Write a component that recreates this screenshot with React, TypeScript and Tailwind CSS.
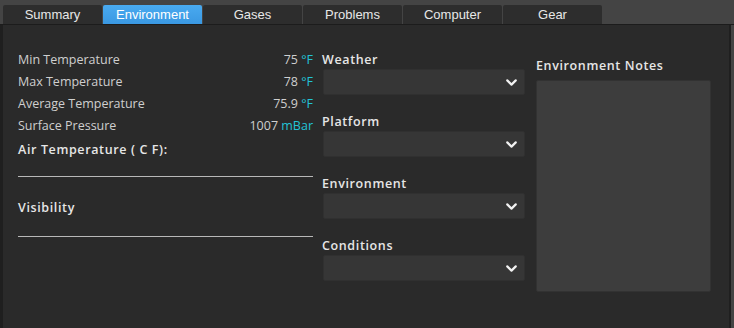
import { ChevronDown } from "lucide-react";

const tabs = ["Summary", "Environment", "Gases", "Problems", "Computer", "Gear"];

const stats = [
  { label: "Min Temperature", value: "75", unit: "°F" },
  { label: "Max Temperature", value: "78", unit: "°F" },
  { label: "Average Temperature", value: "75.9", unit: "°F" },
  { label: "Surface Pressure", value: "1007", unit: "mBar" },
];

const selects = ["Weather", "Platform", "Environment", "Conditions"];

function Select({ label }: { label: string }) {
  return (
    <div className="flex flex-col">
      <div className="h-[21px] pl-[1px] pt-[3px] text-[12.5px] leading-[17px] font-semibold tracking-[0.05em] text-[#e6e6e6]">{label}</div>
      <div className="ml-[2px] flex h-[26px] w-[202px] items-center justify-end rounded-[2px] border border-[#303030] bg-[#363636] pr-[4px]">
        <ChevronDown size={17} strokeWidth={3} className="text-[#f2f2f2]" />
      </div>
    </div>
  );
}

export default function App() {
  return (
    <div className="flex h-[328px] w-[734px] flex-col bg-[#444444] font-['Open_Sans',sans-serif]">
      {/* Tab strip */}
      <div className="flex h-[25px] items-end border-b border-[#1c1c1c] pl-[3px]">
        {tabs.map((t) => (
          <div
            key={t}
            className={
              t === "Environment"
                ? "mr-[1px] flex h-[19px] w-[99px] items-center justify-center rounded-t-[2px] bg-gradient-to-b from-[#49aaf0] to-[#3a98e2] pt-[1px] font-['Liberation_Sans',sans-serif] text-[13px] text-white"
                : "mr-[1px] flex h-[19px] w-[99px] items-center justify-center rounded-t-[2px] bg-[#2d2d2d] pt-[1px] font-['Liberation_Sans',sans-serif] text-[13px] text-[#e8e8e8]"
            }
          >
            {t}
          </div>
        ))}
      </div>

      {/* Panel */}
      <div className="mr-[3px] flex flex-1 border-l-[3px] border-r-[2px] border-l-[#1f1f1f] border-r-[#1f1f1f] bg-[#2a2a2a]">
        {/* Left column */}
        <div className="flex w-[310px] flex-col pl-[15px] pt-[24px]">
          {stats.map((s) => (
            <div key={s.label} className="flex h-[22px] items-center justify-between text-[12.5px] text-[#cfcfcf]">
              <span>{s.label}</span>
              <span>
                {s.value} <span className="text-[#22c3d6]">{s.unit}</span>
              </span>
            </div>
          ))}
          <div className="mt-[4px] h-[20px] text-[12.5px] font-semibold tracking-[0.05em] text-[#e6e6e6]">Air Temperature ( C F):</div>
          <div className="mt-[15px] h-px bg-[#b8b8b8]" />
          <div className="mt-[22px] h-[20px] text-[12.5px] font-semibold tracking-[0.05em] text-[#e6e6e6]">Visibility</div>
          <div className="mt-[17px] h-px bg-[#b8b8b8]" />
        </div>

        {/* Middle column */}
        <div className="ml-[8px] flex flex-col gap-[15px] pt-[23px]">
          {selects.map((s) => (
            <Select key={s} label={s} />
          ))}
        </div>

        {/* Notes */}
        <div className="ml-[10px] flex flex-col pt-[32px]">
          <div className="h-[23px] pl-[1px] text-[12.5px] font-semibold tracking-[0.05em] text-[#e6e6e6]">Environment Notes</div>
          <div className="ml-[1px] h-[212px] w-[175px] rounded-[2px] border border-[#323232] bg-[#3d3d3d]" />
        </div>
      </div>
    </div>
  );
}
